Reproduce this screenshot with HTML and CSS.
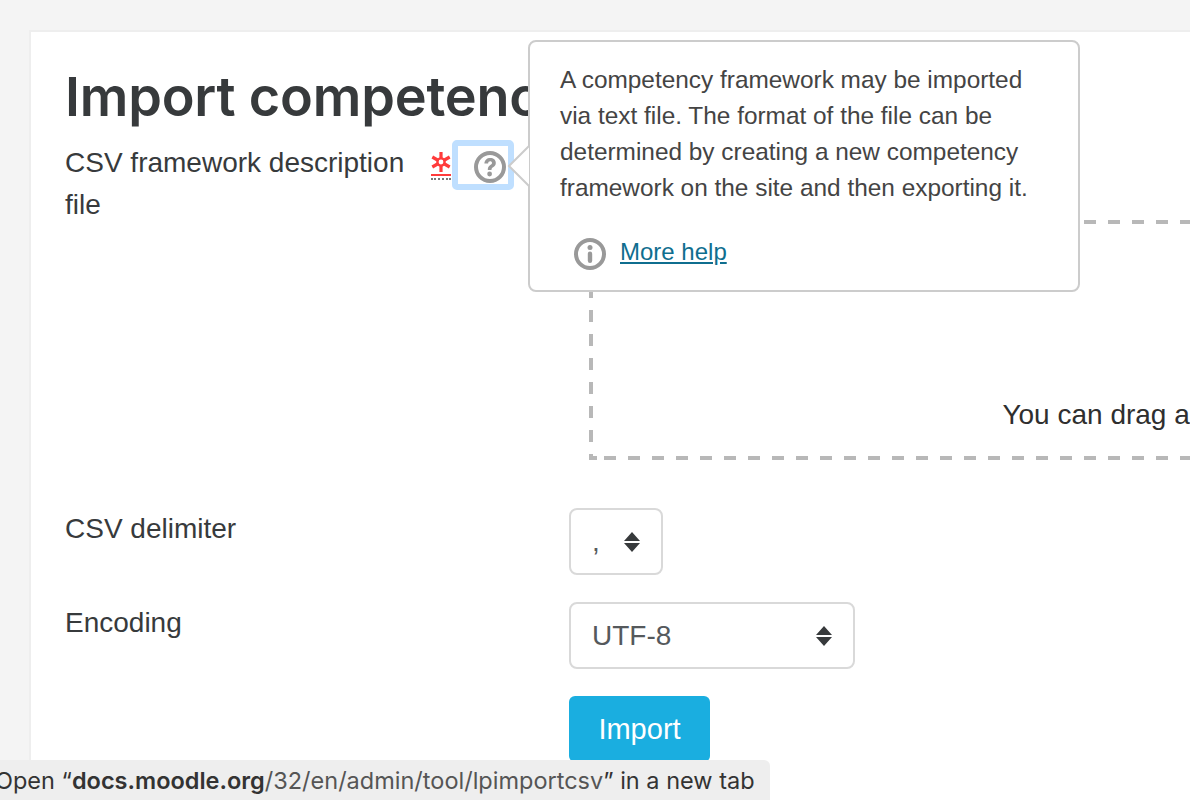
FILE: index.html
```html
<!DOCTYPE html>
<html lang="en">
<head>
<meta charset="utf-8">
<title>Import competency framework</title>
<link rel="stylesheet" href="styles.css">
</head>
<body>
<main class="card">
  <h1 class="title">Import competency framework</h1>
  <form class="form">
    <div class="row row-file">
      <div class="label-cell">
        <label class="label label-file">CSV framework description file</label>
        <abbr class="required" title="Required">
          <svg class="req-icon" viewBox="0 0 20 20" width="20" height="20" aria-hidden="true">
            <g stroke="#ff3b3b" stroke-width="3.200" fill="none">
              <path d="M10 0v6M10 14v6M1.300 5l5.200 3M13.500 12l5.200 3M1.300 15l5.200-3M13.500 8l5.200-3"/>
              <circle cx="10" cy="10" r="3.600" stroke-width="2.400"/>
            </g>
          </svg>
        </abbr>
        <a class="help" href="#" aria-label="Help">
          <svg viewBox="0 0 32 32" width="32" height="32" aria-hidden="true">
            <circle cx="16" cy="16" r="14" fill="none" stroke="#999" stroke-width="4"/>
            <path d="M10.400 12.600C10.600 9 13 7 16.200 7c3.300 0 5.600 2 5.600 4.900 0 2.200-1.100 3.300-2.700 4.400-1.300.9-1.600 1.400-1.600 2.700h-3.700c0-2.500.7-3.800 2.500-5 1.200-.8 1.700-1.300 1.700-2.100 0-1-.8-1.600-1.800-1.600-1.200 0-2 .7-2.100 2.300z" fill="#999"/>
            <circle cx="15.600" cy="23" r="2.400" fill="#999"/>
          </svg>
        </a>
      </div>
      <div class="dropzone">
        <p class="drop-text">You can drag and drop files here to add them.</p>
      </div>
    </div>
    <div class="row row-delim">
      <label class="label">CSV delimiter</label>
      <div class="select-wrap select-small">
        <select class="select"><option>,</option></select>
        <svg class="updown" viewBox="0 0 16 20" width="16" height="20" aria-hidden="true"><path d="M8 0l8 9H0zM8 20l-8-9h16z" fill="#373a3c"/></svg>
      </div>
    </div>
    <div class="row row-enc">
      <label class="label">Encoding</label>
      <div class="select-wrap select-large">
        <select class="select"><option>UTF-8</option></select>
        <svg class="updown" viewBox="0 0 16 20" width="16" height="20" aria-hidden="true"><path d="M8 0l8 9H0zM8 20l-8-9h16z" fill="#373a3c"/></svg>
      </div>
    </div>
    <div class="row row-btn">
      <span></span>
      <button type="button" class="button">Import</button>
    </div>
  </form>
</main>

<aside class="popover">
  <p class="popover-text">A competency framework may be imported via text file. The format of the file can be determined by creating a new competency framework on the site and then exporting it.</p>
  <div class="popover-more">
    <svg class="info-icon" viewBox="0 0 32 32" width="32" height="32" aria-hidden="true">
      <circle cx="16" cy="16" r="14" fill="none" stroke="#999" stroke-width="4"/>
      <circle cx="16" cy="9.500" r="2.500" fill="#999"/>
      <rect x="13.800" y="13.500" width="4.400" height="11.500" rx="2.200" fill="#999"/>
    </svg>
    <a class="more-link" href="#">More help</a>
  </div>
  <svg class="popover-arrow" viewBox="0 0 22 44" width="22" height="44" aria-hidden="true">
    <path d="M22 2L2 22l20 20z" fill="#fff"/>
    <path d="M22 2L2 22l20 20" fill="none" stroke="#ccc" stroke-width="2"/>
  </svg>
</aside>

<div class="status">Open “<b>docs.moodle.org</b><span class="status-path">/32/en/admin/tool/lpimportcsv</span>” in a new tab</div>
</body>
</html>
```
FILE: styles.css
```css
* { box-sizing: border-box; }
html, body { height: 100%; }
body {
  margin: 0;
  width: 1190px;
  height: 800px;
  overflow: hidden;
  position: relative;
  background: #f4f4f4;
  font-family: "Liberation Sans", Arial, sans-serif;
  color: #373a3c;
  font-size: 28px;
  line-height: 42px;
}
.card {
  margin: 30px 0 0 29px;
  width: 1600px;
  height: 800px;
  padding: 0 0 0 34px;
  background: #fff;
  border: 2px solid #eee;
}
.title {
  margin: 0;
  padding-top: 31px;
  font-family: Inter, "Liberation Sans", sans-serif;
  font-size: 54px;
  line-height: 68px;
  font-weight: 600;
  letter-spacing: -0.2px;
  white-space: nowrap;
  color: #373a3c;
}
.form { margin: 0; }
.row {
  display: grid;
  grid-template-columns: 504px 1fr;
}
.label-cell { display: flex; align-items: flex-start; }
.label { display: block; }
.label-file { width: 366px; margin-top: 11px; }
.required {
  width: 20px;
  height: 28px;
  margin-top: 21px;
  display: block;
  line-height: 0;
  border-bottom: 2px dotted #777;
}
.req-icon { display: block; border-bottom: 2px solid #ff3b3b; height: 24px; padding-bottom: 2px; }
.help {
  margin-left: 1px;
  margin-top: 9px;
  width: 62px;
  height: 50px;
  border: 6px solid #bfdfff;
  border-radius: 5px;
  background: #fff;
  display: flex;
  align-items: center;
  justify-content: flex-end;
  padding: 4px 2px 0 0;
}
.row-file { height: 377px; }
.dropzone {
  margin: 89px 0 0 20px;
  height: 240px;
  width: 1394px;
  display: flex;
  align-items: flex-end;
  justify-content: center;
  background-image:
    linear-gradient(to right, #b8b8b8 12px, transparent 12px),
    linear-gradient(to right, #b8b8b8 12px, transparent 12px),
    linear-gradient(to bottom, #b8b8b8 12px, transparent 12px),
    linear-gradient(to bottom, #b8b8b8 12px, transparent 12px),
    linear-gradient(#b8b8b8, #b8b8b8);
  background-size: 24px 4px, 24px 4px, 4px 24px, 4px 24px, 8px 4px;
  background-position: 15px 0, 15px 100%, 0 18px, 100% 18px, 0 100%;
  background-repeat: repeat-x, repeat-x, repeat-y, repeat-y, no-repeat;
}
.drop-text { margin: 0 0 24px; color: #2f2f2f; white-space: nowrap; }
.row-delim { height: 94px; }
.row-enc { height: 94px; }
.select-wrap { position: relative; height: 67px; }
.select-small { width: 94px; }
.select-large { width: 286px; }
.select {
  appearance: none;
  -webkit-appearance: none;
  width: 100%;
  height: 100%;
  padding: 0 21px;
  border: 2px solid #d9d9d9;
  border-radius: 8px;
  background: #fff;
  color: #55595c;
  font: 28px "Liberation Sans", Arial, sans-serif;
}
.updown { position: absolute; right: 23px; top: 24px; }
.button {
  width: 141px;
  height: 66px;
  border: 0;
  border-radius: 6px;
  background: #1aaee0;
  color: #fff;
  font: 29px "Liberation Sans", Arial, sans-serif;
}
.popover {
  position: absolute;
  left: 528px;
  top: 40px;
  width: 552px;
  height: 252px;
  padding: 20px 30px 0;
  background: #fff;
  border: 2px solid #ccc;
  border-radius: 8px;
  font-size: 24px;
  line-height: 36px;
  color: #444;
}
.popover-text { margin: 0; font-size: 24.4px; }
.popover-more {
  display: flex;
  align-items: flex-start;
  gap: 14px;
  margin: 28px 0 0 14px;
}
.info-icon { margin-top: 4px; }
.more-link { color: #0f6e8f; text-decoration: underline; }
.popover-arrow { position: absolute; left: -23px; top: 102px; }
.status {
  position: absolute;
  left: 0;
  bottom: 0;
  width: 770px;
  height: 40px;
  text-indent: -5px;
  background: #eeeeee;
  border-top-right-radius: 6px;
  font-family: Inter, "Liberation Sans", sans-serif;
  font-size: 23.500px;
  line-height: 42px;
  color: #333;
  white-space: nowrap;
  overflow: hidden;
}
.status b { font-weight: 600; }
.status-path { color: #555; }
```
